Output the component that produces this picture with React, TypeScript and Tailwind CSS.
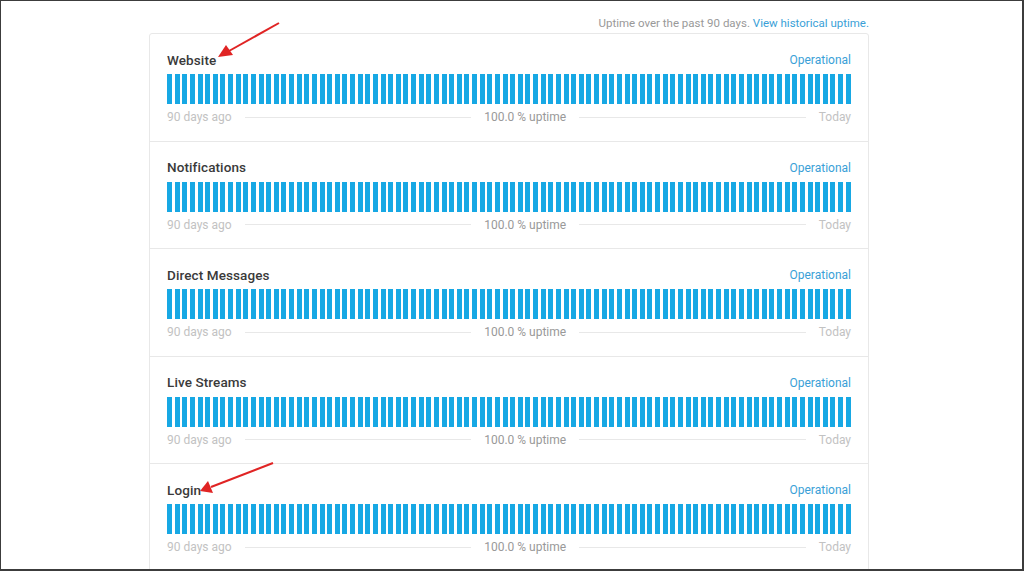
const components = ['Website', 'Notifications', 'Direct Messages', 'Live Streams', 'Login']

function UptimeRow({ name, last }: { name: string; last: boolean }) {
  return (
    <div className={`px-[17px] pt-[17px] pb-[15.5px] ${last ? '' : 'border-b border-[#e8e8e8]'}`}>
      <div className="flex items-center justify-between h-[18px]">
        <span className="text-[13.5px] font-medium text-[#3a3a3a] tracking-[0.1px]">{name}</span>
        <span className="text-[12px] text-[#3a9fd7]">Operational</span>
      </div>
      <div className="flex gap-[2.6px] h-[30px] mt-[5px]">
        {Array.from({ length: 90 }).map((_, i) => (
          <div key={i} className="flex-1 bg-[#17a8e4]" />
        ))}
      </div>
      <div className="flex items-center h-[16px] mt-[5px] text-[12px]">
        <span className="text-[#c2c2c2]">90 days ago</span>
        <div className="flex-1 h-px bg-[#e8e8e8] mx-[13px]" />
        <span className="text-[#999]">100.0 % uptime</span>
        <div className="flex-1 h-px bg-[#e8e8e8] mx-[13px]" />
        <span className="text-[#c2c2c2]">Today</span>
      </div>
    </div>
  )
}

export default function App() {
  return (
    <div
      className="relative w-[1024px] h-[571px] overflow-hidden bg-white border-2 border-t border-l border-[#3c3c3c]"
      style={{ fontFamily: 'Roboto, "Liberation Sans", sans-serif' }}
    >
      <div className="w-[720px] ml-[148px]">
        <div className="flex justify-end h-[32px] pt-[15px] text-[11.5px] leading-[14px]">
          <span className="text-[#999]">Uptime over the past 90 days.&nbsp;</span>
          <span className="text-[#3a9fd7]">View historical uptime.</span>
        </div>
        <div className="border border-[#e8e8e8] rounded-[3px]">
          {components.map((c, i) => (
            <UptimeRow key={c} name={c} last={i === components.length - 1} />
          ))}
        </div>
      </div>

      <svg className="absolute left-0 top-0 pointer-events-none" width="1024" height="571">
        <line x1="278" y1="22" x2="228" y2="50" stroke="#e02424" strokeWidth="2" />
        <polygon points="217,56 225,44 232,54" fill="#e02424" />
        <line x1="272" y1="462" x2="210" y2="486" stroke="#e02424" strokeWidth="2" />
        <polygon points="199,490 207,480 212,492" fill="#e02424" />
      </svg>
    </div>
  )
}
